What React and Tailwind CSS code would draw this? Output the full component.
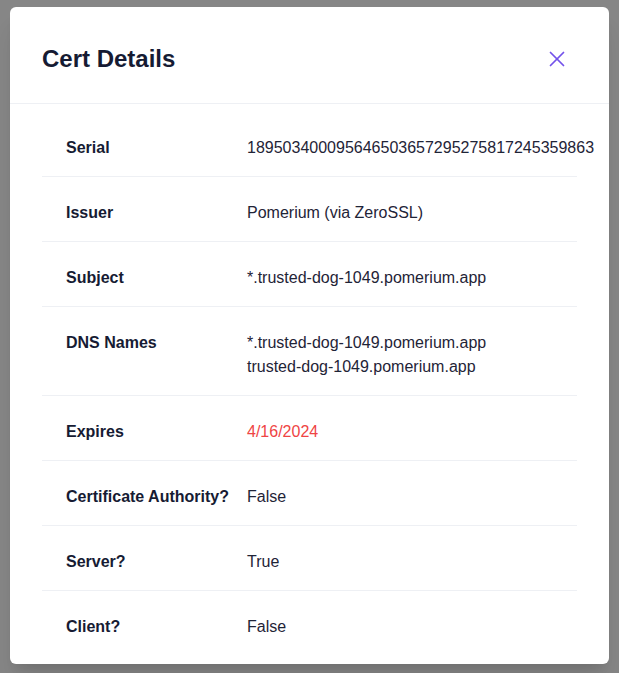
import { X } from 'lucide-react';

const rows = [
  { label: 'Serial', value: ['189503400095646503657295275817245359863'] },
  { label: 'Issuer', value: ['Pomerium (via ZeroSSL)'] },
  { label: 'Subject', value: ['*.trusted-dog-1049.pomerium.app'] },
  { label: 'DNS Names', value: ['*.trusted-dog-1049.pomerium.app', 'trusted-dog-1049.pomerium.app'] },
  { label: 'Expires', value: ['4/16/2024'], danger: true },
  { label: 'Certificate Authority?', value: ['False'] },
  { label: 'Server?', value: ['True'] },
  { label: 'Client?', value: ['False'] },
];

const CertDetails = () => {
  return (
    <div className="w-[599px] bg-white rounded-md shadow-xl overflow-visible">
      {/* Header */}
      <div className="flex items-center justify-between pl-8 pr-8 pt-[36px] pb-[28px] border-b border-[#eef0f4]">
        <h2 className="text-2xl leading-8 font-bold text-[#161b33]">Cert Details</h2>
        <button className="w-10 h-8 flex items-center justify-center text-[#7352ea]" aria-label="Close">
          <X size={26} strokeWidth={1.6} />
        </button>
      </div>

      {/* Table */}
      <div className="px-8 pt-2 pb-[9px]">
        {rows.map((row, i) => (
          <div
            key={row.label}
            className={`grid grid-cols-[205px_1fr] ${i < rows.length - 1 ? 'border-b border-[#eef0f4]' : ''}`}
          >
            <div className="pl-6 pt-6 pb-4 text-base leading-6 font-bold text-[#161b33] whitespace-nowrap">
              {row.label}
            </div>
            <div className={`pt-6 pb-4 text-base leading-6 whitespace-nowrap ${row.danger ? 'text-[#ef4444]' : 'text-[#1f2437]'}`}>
              {row.value.map((v) => (
                <div key={v}>{v}</div>
              ))}
            </div>
          </div>
        ))}
      </div>
    </div>
  );
};

export default function App() {
  return (
    <div
      className="w-[619px] h-[673px] bg-[#868686] pt-[7px] pl-[10px]"
      style={{ fontFamily: '"Liberation Sans", Arial, sans-serif' }}
    >
      <CertDetails />
    </div>
  );
}
